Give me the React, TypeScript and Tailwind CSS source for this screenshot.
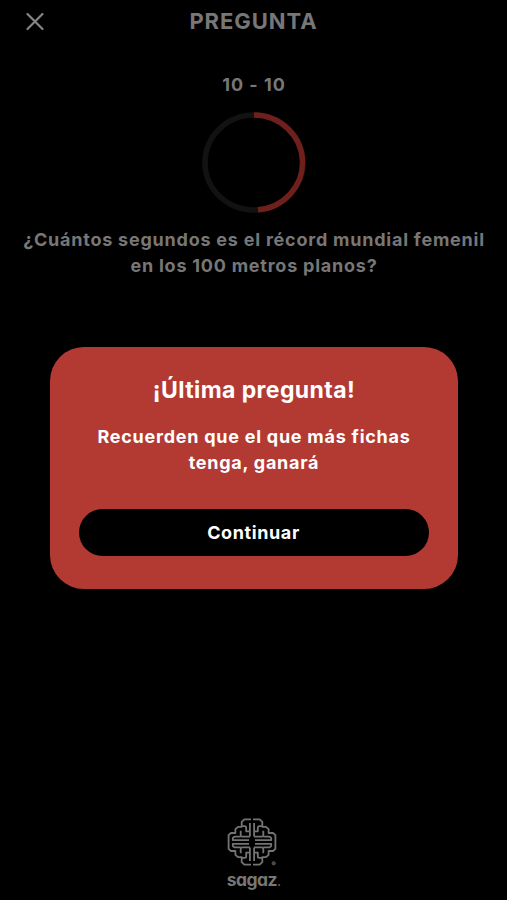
import React, { useState } from 'react';

const TimerRing = () => (
  <svg width="104" height="102" viewBox="0 0 104 102" fill="none" strokeWidth="5.5">
    <ellipse cx="52" cy="51.5" rx="49" ry="47.5" stroke="#121212" />
    <path d="M52 4A49 47.5 0 0 1 56 98.8" stroke="#6f1f1c" />
  </svg>
);

// One quarter of the knot, mirrored on both axes
const KnotQuarter = () => (
  <>
    <path d="M-1 -22.6H-7.6L-10.3 -20.2V-15.2H-14L-16.6 -12.8V-9H-21L-23.4 -6.8V0" />
    <path d="M-10.3 -15.8H-7.4Q-5.8 -15.8 -5.8 -14.2V-10.6H-2.1" />
    <path d="M-2.1 -19V-5.6" />
    <path d="M-11.3 -11.2V-6.8Q-11.3 -5.4 -9.8 -5.4H-2.1" />
    <path d="M-11.3 -5.4H-17.6L-19.2 -4V-1.9H-3" />
  </>
);

const SagazLogo = () => (
  <svg width="54" height="50" viewBox="-26 -25 54 50" fill="none" stroke="#747474" strokeWidth="1.8" strokeLinejoin="round">
    <g><KnotQuarter /></g>
    <g transform="scale(-1 1)"><KnotQuarter /></g>
    <g transform="scale(1 -1)"><KnotQuarter /></g>
    <g transform="scale(-1 -1)"><KnotQuarter /></g>
    <circle cx="21.7" cy="21.3" r="1.6" fill="#444" stroke="#555" strokeWidth="1" />
  </svg>
);

const LastQuestionModal = ({ onContinue }: { onContinue: () => void }) => (
  <div className="absolute inset-x-0 top-[347px] flex justify-center">
    <div className="flex h-[242px] w-[408px] flex-col items-center rounded-[34px] bg-[#b33a33] px-[29px] pt-[26px] text-center text-white">
      <h2 className="pl-px text-[23px] font-bold leading-[34px] tracking-[0.4px]">¡Última pregunta!</h2>
      <p className="mt-[17px] pl-px text-[18px] font-bold leading-[26px] tracking-[0.75px]">
        Recuerden que el que más fichas
        <br />
        tenga, ganará
      </p>
      <button
        onClick={onContinue}
        className="mt-[33px] h-[47px] w-full rounded-full bg-black text-[18px] font-bold tracking-[0.6px]"
      >
        Continuar
      </button>
    </div>
  </div>
);

export default function App() {
  const [open, setOpen] = useState(true);

  return (
    <div className="relative flex h-[900px] w-[507px] flex-col items-center overflow-hidden bg-black font-['Inter','Liberation_Sans',sans-serif] text-[#777]">
      <header className="grid h-[43px] w-full grid-cols-[70px_1fr_70px] items-center">
        <button aria-label="Cerrar" className="flex justify-center">
          <svg width="18" height="18" viewBox="0 0 18 18" fill="none" stroke="#858585" strokeWidth="2.2" strokeLinecap="round">
            <path d="M1.5 1L16.5 16M16.5 1L1.5 16" />
          </svg>
        </button>
        <h1 className="text-center text-[22px] font-bold tracking-[0.95px]">PREGUNTA</h1>
      </header>

      <p className="mt-[28px] pl-px text-[18px] font-bold leading-[27px] tracking-[1px]">10 - 10</p>
      <div className="mt-[13px]">
        <TimerRing />
      </div>
      <p className="mt-[14px] whitespace-nowrap pl-px text-center text-[18px] font-bold leading-[26px] tracking-[0.77px]">
        ¿Cuántos segundos es el récord mundial femenil
        <br />
        en los 100 metros planos?
      </p>

      <footer className="mt-auto flex h-[83px] flex-col items-center">
        <div className="pr-[2px]">
          <SagazLogo />
        </div>
        <span className="text-[17.5px] font-bold leading-[25px] tracking-[-0.5px] [font-feature-settings:'cv11']">
          sagaz<span className="text-[11px]">.</span>
        </span>
      </footer>

      {open && <LastQuestionModal onContinue={() => setOpen(false)} />}
    </div>
  );
}
